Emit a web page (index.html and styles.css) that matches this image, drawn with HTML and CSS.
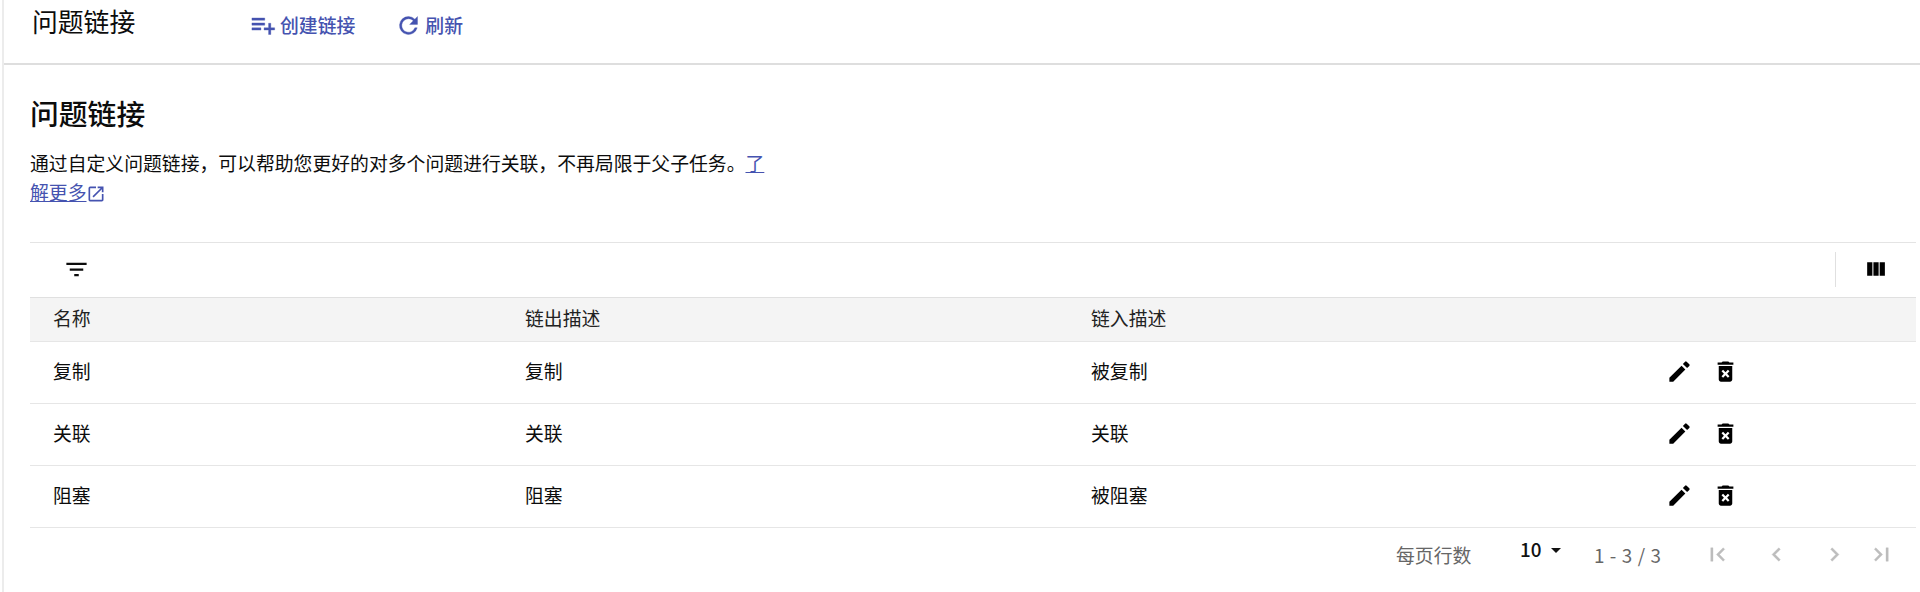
FILE: index.html
```html
<!DOCTYPE html>
<html lang="zh-CN">
<head>
<meta charset="utf-8">
<title>问题链接</title>
<link rel="stylesheet" href="styles.css">
</head>
<body>
<svg class="sprite" aria-hidden="true">
  <symbol id="edit" viewBox="0 0 24 24"><path d="M3 17.6V21h3.4L17.2 10.2l-3.4-3.4L3 17.6zM20.71 7.04a1 1 0 0 0 0-1.41l-2.34-2.34a1 1 0 0 0-1.41 0l-1.95 1.95 3.75 3.75 1.95-1.95z"/></symbol>
  <symbol id="trash" viewBox="0 0 24 24"><path d="M6 19c0 1.1.9 2 2 2h8c1.1 0 2-.9 2-2V7H6v12zm2.46-7.12 1.41-1.41L12 12.59l2.12-2.12 1.41 1.41L13.41 14l2.12 2.12-1.41 1.41L12 15.41l-2.12 2.12-1.41-1.41L10.59 14l-2.13-2.12zM15.5 4l-1-1h-5l-1 1H5v2h14V4z"/></symbol>
</svg>
<main class="page">
  <header class="header">
    <span class="header-title">问题链接</span>
    <button class="action create"><svg viewBox="0 0 24 24"><path d="M14 9.7H2.6v2H14v-2zm0-4.4H2.6v2H14v-2zM19.4 14v-4h-2v4h-4v2h4v4h2v-4h3.4v-2h-3.4zM2.6 16.1h8v-2h-8v2z"/></svg>创建链接</button>
    <button class="action refresh"><svg viewBox="0 0 24 24"><path d="M17.65 6.35A7.96 7.96 0 0 0 12 4a8 8 0 1 0 7.73 10h-2.08A6 6 0 1 1 12 6c1.66 0 3.14.69 4.22 1.78L13 11h7V4l-2.35 2.35z"/></svg>刷新</button>
  </header>
  <section class="content">
    <h2 class="title">问题链接</h2>
    <p class="description">通过自定义问题链接，可以帮助您更好的对多个问题进行关联，不再局限于父子任务。<a class="more" href="#">了<br>解更多</a><svg class="open" viewBox="0 0 24 24"><path d="M19 19H5V5h7V3H5a2 2 0 0 0-2 2v14a2 2 0 0 0 2 2h14c1.1 0 2-.9 2-2v-7h-2v7zM14 3v2h3.59l-9.83 9.83 1.41 1.41L19 6.41V10h2V3h-7z"/></svg></p>
    <div class="filter-bar">
      <svg class="filter" viewBox="0 0 24 24"><path d="M10 18h4v-2h-4v2zM3 6v2h18V6H3zm3 7h12v-2H6v2z"/></svg>
      <div class="columns"><svg viewBox="0 0 24 24"><path d="M10 18h5V5h-5v13zm-6 0h5V5H4v13zM16 5v13h5V5h-5z"/></svg></div>
    </div>
    <div class="table">
      <div class="row head"><span>名称</span><span>链出描述</span><span>链入描述</span></div>
      <div class="row"><span>复制</span><span>复制</span><span>被复制</span><div class="tools"><svg><use href="#edit"/></svg><svg><use href="#trash"/></svg></div></div>
      <div class="row"><span>关联</span><span>关联</span><span>关联</span><div class="tools"><svg><use href="#edit"/></svg><svg><use href="#trash"/></svg></div></div>
      <div class="row"><span>阻塞</span><span>阻塞</span><span>被阻塞</span><div class="tools"><svg><use href="#edit"/></svg><svg><use href="#trash"/></svg></div></div>
    </div>
    <footer class="pagination">
      <span class="label">每页行数</span>
      <span class="size">10<i class="caret"></i></span>
      <span class="range">1 - 3 / 3</span>
      <svg class="first" viewBox="0 0 24 24"><path d="M18.41 16.59 13.82 12l4.59-4.59L17 6l-6 6 6 6zM6 6h2v12H6z"/></svg>
      <svg class="prev" viewBox="0 0 24 24"><path d="M15.41 7.41 14 6l-6 6 6 6 1.41-1.41L10.83 12z"/></svg>
      <svg class="next" viewBox="0 0 24 24"><path d="M10 6 8.59 7.41 13.17 12l-4.58 4.59L10 18l6-6z"/></svg>
      <svg class="last" viewBox="0 0 24 24"><path d="M5.59 7.41 10.18 12l-4.59 4.59L7 18l6-6-6-6zM16 6h2v12h-2z"/></svg>
    </footer>
  </section>
</main>
</body>
</html>
```
FILE: styles.css
```css
* { box-sizing: border-box; }
body {
  margin: 0;
  background: #fff;
  color: #0c0c0c;
  font: 18.83px/29px "Noto Sans CJK SC", sans-serif;
}
svg { display: block; flex: none; width: 27px; height: 27px; fill: currentColor; }
.sprite { display: none; }
.page { height: 592px; margin-left: 2px; border-left: 2px solid #ececec; overflow: hidden; }
.header { display: flex; align-items: flex-start; height: 65px; border-bottom: 2px solid #dedede; }
.header-title { width: 217px; padding: 3px 0 0 28px; font-size: 25.8px; line-height: 36px; }
.action {
  display: flex; align-items: center; gap: 4px;
  margin: 10px 0 0 28px; padding: 0; border: 0; background: none;
  color: #4553b0; font: 500 18.83px/29px "Noto Sans CJK SC", sans-serif;
}
.action svg { margin-top: 2px; stroke: currentColor; stroke-width: .3; }
.refresh { margin-left: 40px; gap: 3px; }
.content { padding: 28px 4px 0 26px; }
.title { margin: 0; font-size: 28.8px; line-height: 40px; font-weight: 500; }
.description { margin: 15px 0 0; }
.more { color: #4553b0; }
.open { display: inline-block; width: 20px; height: 20px; margin-left: -1px; vertical-align: -4px; color: #4553b0; }
.filter-bar {
  display: flex; align-items: center; justify-content: space-between;
  height: 55px; margin-top: 36px; padding: 0 0 1px 33px; border-top: 1px solid #e4e4e4;
}
.columns { display: flex; align-items: center; width: 81px; height: 35px; padding-left: 27px; border-left: 1px solid #e0e0e0; color: #000; }
.columns svg { width: 25px; height: 25px; }
.row {
  display: grid; grid-template-columns: 472px 566px 575px 1fr; align-items: center;
  height: 62px; padding: 0 0 2px 23px; border-bottom: 1px solid #e6e6e6;
}
.row span { margin-top: -2px; }
.head { height: 45px; border-top: 1px solid #e0e0e0; background: #f4f4f4; color: #222; }
.tools { display: flex; gap: 19px; color: #000; }
.pagination { display: flex; align-items: center; height: 52px; color: #666; }
.label { width: 124px; margin-left: 1366px; }
.size { display: flex; align-items: center; gap: 10px; width: 74px; margin-top: -12px; color: #111; font-weight: 500; }
.caret { margin-top: 4px; border: 5.5px solid transparent; border-top-color: #111; border-bottom: 0; }
.range { width: 110px; letter-spacing: .6px; }
.pagination svg { color: #bdbdbd; stroke: currentColor; stroke-width: .3; }
.prev { margin-left: 32px; }
.next { margin-left: 31px; }
.last { margin-left: 20px; }
```
